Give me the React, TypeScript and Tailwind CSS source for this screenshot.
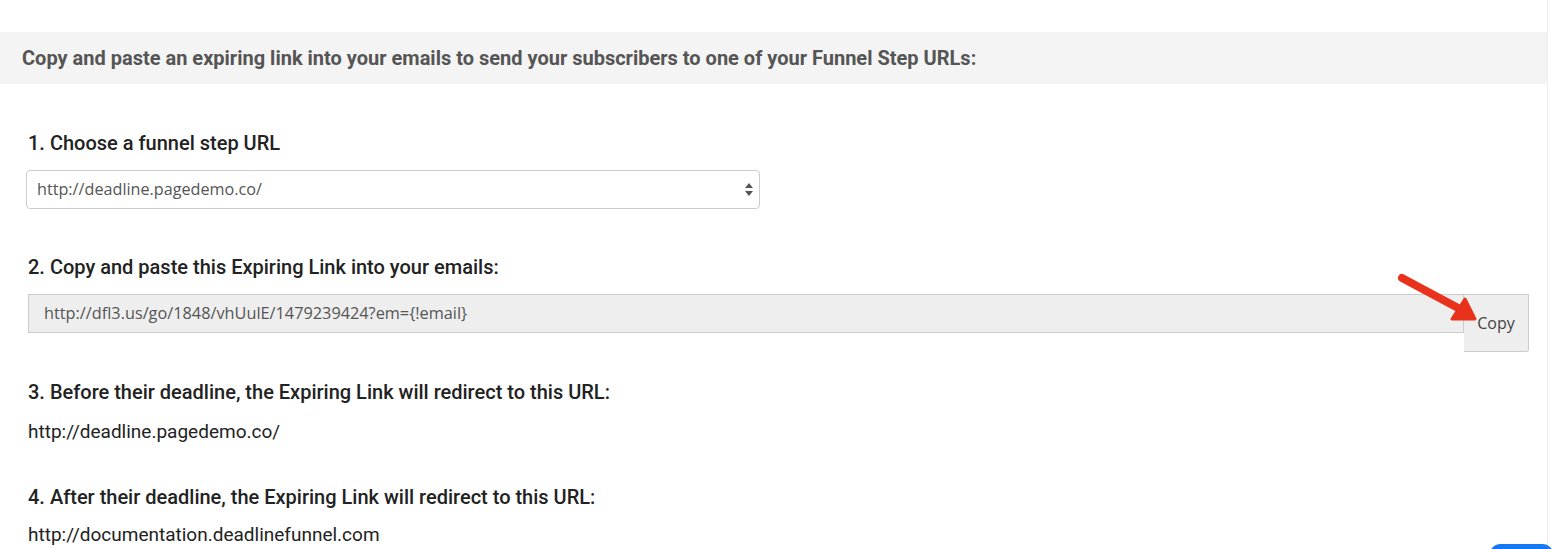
export default function App() {
  return (
    <div className="relative h-[549px] w-[1558px] overflow-hidden bg-white font-['Roboto',sans-serif]">
      <div className="h-[549px] w-[1548px] border-r border-[#eeeeee] pt-[32px]">
        <div className="flex h-[52px] items-center bg-[#f4f4f4] px-[22px]">
          <h2 className="text-[20px] font-bold text-[#555555]">
            Copy and paste an expiring link into your emails to send your subscribers to one of your Funnel Step URLs:
          </h2>
        </div>

        <div className="px-[28px]">
          <h3 className="mt-[47px] text-[20px] font-medium leading-[24px] text-[#222222]">1. Choose a funnel step URL</h3>
          <div className="ml-[-2px] mt-[15px] flex h-[39px] w-[734px] items-center justify-between rounded-[4px] border border-[#cccccc] bg-white pl-[10px] pr-[6px]">
            <span className="font-['Open_Sans',sans-serif] text-[16.2px] text-[#555555]">http://deadline.pagedemo.co/</span>
            <svg width="8" height="13" viewBox="0 0 8 13">
              <path d="M4 0 L8 5 H0 Z M4 13 L8 8 H0 Z" fill="#555555" />
            </svg>
          </div>

          <h3 className="mt-[46px] text-[20px] font-medium leading-[24px] text-[#222222]">
            2. Copy and paste this Expiring Link into your emails:
          </h3>
          <div className="mt-[15px] flex items-start">
            <div className="flex h-[39px] w-[1436px] shrink-0 items-center border border-[#cccccc] bg-[#eeeeee] pl-[15px]">
              <span className="font-['Open_Sans',sans-serif] text-[16.3px] text-[#555555]">
                http://dfl3.us/go/1848/vhUulE/1479239424?em={"{"}!email{"}"}
              </span>
            </div>
            <button className="flex h-[58px] w-[65px] shrink-0 items-center justify-center rounded-br-[3px] border border-l-0 border-[#cccccc] bg-[#eeeeee] font-['Open_Sans',sans-serif] text-[16px] text-[#444444]">
              Copy
            </button>
          </div>

          <h3 className="mt-[28px] text-[20px] font-medium leading-[24px] text-[#222222]">
            3. Before their deadline, the Expiring Link will redirect to this URL:
          </h3>
          <p className="mt-[17px] text-[19px] leading-[22px] text-[#222222]">http://deadline.pagedemo.co/</p>

          <h3 className="mt-[42px] text-[20px] font-medium leading-[24px] text-[#222222]">
            4. After their deadline, the Expiring Link will redirect to this URL:
          </h3>
          <p className="mt-[15px] text-[19px] leading-[22px] text-[#222222]">http://documentation.deadlinefunnel.com</p>
        </div>
      </div>

      <svg className="absolute left-[1390px] top-[268px]" width="92" height="60" viewBox="0 0 92 60">
        <line x1="12" y1="10" x2="70" y2="41" stroke="#e8321c" strokeWidth="8" strokeLinecap="round" />
        <path d="M85 51 L62 51 L75 31 Z" fill="#e8321c" stroke="#e8321c" strokeWidth="3" strokeLinejoin="round" />
      </svg>

      <div className="absolute left-[1490px] top-[544px] h-[20px] w-[63px] rounded-t-[10px] bg-[#1479f3]" />
    </div>
  );
}
